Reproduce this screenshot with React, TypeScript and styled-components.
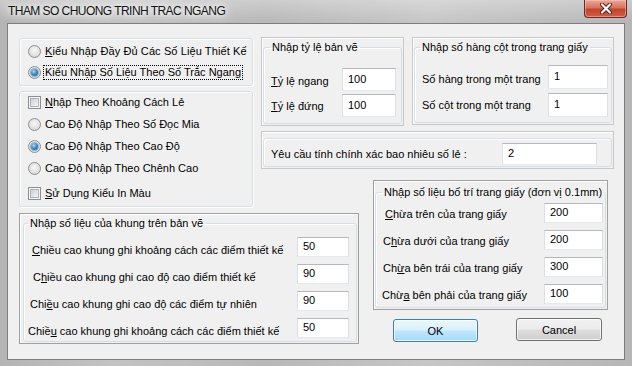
import React from 'react';
import styled, { createGlobalStyle } from 'styled-components';

const GlobalStyle = createGlobalStyle`
  html, body {
    margin: 0;
    padding: 0;
    background: #b9b9b9;
  }
  body {
    font-family: 'Liberation Sans', Arial, sans-serif;
    font-size: 11px;
    color: #000;
  }
`;

const Window = styled.div`
  width: 632px;
  height: 366px;
  box-sizing: border-box;
  display: flex;
  flex-direction: column;
  padding: 0 7px 6px 7px;
  background:
    linear-gradient(180deg, rgba(255, 255, 255, 0.3) 0%, rgba(255, 255, 255, 0) 22px),
    linear-gradient(90deg, #b4b4b4 0%, #c3c3c3 18%, #b8b8b8 42%, #c6c6c6 68%, #b6b6b6 100%);
`;

const TitleBar = styled.div`
  height: 23px;
  display: flex;
  align-items: flex-start;
`;

const Title = styled.span`
  margin: 4px 0 0 1px;
  font-family: 'Liberation Sans', Arial, sans-serif;
  font-size: 12px;
  letter-spacing: -0.55px;
  line-height: 15px;
  color: #111;
  text-shadow: 0 0 5px #fff, 0 0 9px #fff, 0 0 14px #f4f4f4;
`;

const CloseButton = styled.div`
  margin-left: auto;
  margin-right: -2px;
  width: 43px;
  height: 18px;
  box-sizing: border-box;
  border: 1px solid #6a2a22;
  border-top: none;
  border-radius: 0 0 4px 4px;
  background: linear-gradient(180deg, #e9a99a 0%, #d7725f 45%, #c4432c 55%, #cf5f45 100%);
  box-shadow: inset 0 0 0 1px rgba(255, 210, 200, 0.45);
  display: flex;
  align-items: center;
  justify-content: center;
`;

const Client = styled.div`
  flex: 1;
  box-sizing: border-box;
  background: #f0f0f0;
  border: 1px solid #7d7d7d;
  display: flex;
  gap: 8px;
  padding: 14px 0 0 11px;
`;

const LeftColumn = styled.div`
  width: 234px;
  display: flex;
  flex-direction: column;
`;

const RightColumn = styled.div`
  width: 353px;
  margin-top: -1px;
  display: flex;
  flex-direction: column;
`;

const OptionBox = styled.div<{ $height: number; $top: number; $mt?: number }>`
  height: ${({ $height }) => $height}px;
  box-sizing: border-box;
  margin-top: ${({ $mt }) => $mt ?? 0}px;
  padding: ${({ $top }) => $top}px 0 0 8px;
  border: 1px solid #d5dfe5;
  border-radius: 3px;
  box-shadow: inset 1px 1px 0 #fff, 1px 1px 0 #fff;
`;

const OptionRow = styled.div<{ $h: number; $mt?: number }>`
  height: ${({ $h }) => $h}px;
  margin-top: ${({ $mt }) => $mt ?? 0}px;
  display: flex;
  align-items: center;
  white-space: nowrap;
`;

const Radio = styled.span<{ $on?: boolean }>`
  width: 13px;
  height: 13px;
  box-sizing: border-box;
  border-radius: 50%;
  border: 1px solid #8e8f8f;
  background: radial-gradient(circle at 50% 40%, #f8f8f8 0%, #e2e2e2 55%, #c9c9c9 100%);
  display: flex;
  align-items: center;
  justify-content: center;
  flex: none;

  &::after {
    content: '';
    display: ${({ $on }) => ($on ? 'block' : 'none')};
    width: 7px;
    height: 7px;
    border-radius: 50%;
    background: radial-gradient(circle at 40% 35%, #a6dcf7 0%, #3e8fcf 45%, #134f86 100%);
    box-shadow: 0 0 0 1px rgba(30, 80, 130, 0.35);
  }
`;

const Check = styled.span`
  width: 13px;
  height: 13px;
  box-sizing: border-box;
  border: 1px solid #8e8f8f;
  background: #f4f4f4;
  padding: 1px;
  flex: none;

  &::after {
    content: '';
    display: block;
    width: 9px;
    height: 9px;
    box-sizing: border-box;
    border: 1px solid #aeb3b9;
    background: linear-gradient(135deg, #cbcfd5 0%, #e4e6e9 60%, #f6f6f6 100%);
  }
`;

const OptionText = styled.span<{ $focus?: boolean; $spread?: number }>`
  margin-left: 3px;
  padding: 0 1px;
  line-height: 13px;
  letter-spacing: ${({ $spread }) => $spread ?? 0}px;
  outline: ${({ $focus }) => ($focus ? '1px dotted #000' : 'none')};
  outline-offset: 0;
`;

const Frame = styled.div<{ $w: number; $h: number; $dark?: boolean; $pad: string; $ml?: number; $mt?: number }>`
  width: ${({ $w }) => $w}px;
  height: ${({ $h }) => $h}px;
  box-sizing: border-box;
  flex: none;
  margin-left: ${({ $ml }) => $ml ?? 0}px;
  margin-top: ${({ $mt }) => $mt ?? 0}px;
  padding: ${({ $pad }) => $pad};
  border: 1px solid ${({ $dark }) => ($dark ? '#a0a0a0' : '#c8c8c8')};
  box-shadow: inset 1px 1px 0 #fff;
  display: flex;
  flex-direction: column;
`;

const Group = styled.fieldset`
  flex: 1;
  margin: 0;
  min-width: 0;
  padding: 0;
  border: 1px solid #d5dfe5;
  border-radius: 3px;
  box-shadow: inset 1px 1px 0 #fff;
  display: flex;
  flex-direction: column;
`;

const Legend = styled.legend<{ $ml: number }>`
  margin-left: ${({ $ml }) => $ml}px;
  padding: 0 2px;
  line-height: 13px;
  font-size: 11px;
  white-space: nowrap;
`;

const Plain = styled.div`
  flex: 1;
  border: 1px solid #d5dfe5;
  border-radius: 3px;
  box-shadow: inset 1px 1px 0 #fff;
  display: flex;
  align-items: center;
  padding: 2px 14px 0 7px;
`;

const Rows = styled.div<{ $top: number; $gap: number; $right: number }>`
  display: flex;
  flex-direction: column;
  gap: ${({ $gap }) => $gap}px;
  padding: ${({ $top }) => $top}px ${({ $right }) => $right}px 0 0;
`;

const FieldRow = styled.div`
  flex: 1;
  display: flex;
  align-items: center;
  justify-content: space-between;
  white-space: nowrap;
`;

const Label = styled.span<{ $indent: number; $drop?: number }>`
  padding-left: ${({ $indent }) => $indent}px;
  padding-top: ${({ $drop }) => ($drop ?? 0) * 2}px;
  line-height: 13px;
`;

const TextBox = styled.input<{ $w: number; $h: number }>`
  width: ${({ $w }) => $w}px;
  height: ${({ $h }) => $h}px;
  box-sizing: border-box;
  margin: 0;
  padding: 0 0 2px 5px;
  border: 1px solid #dbdfe6;
  border-top-color: #b5b8bf;
  border-bottom-color: #e3e9ef;
  background: #fff;
  font-family: 'Liberation Sans', Arial, sans-serif;
  font-size: 11px;
  color: #000;
  outline: none;
  flex: none;
`;

const TopRow = styled.div`
  display: flex;
  gap: 8px;
  align-items: flex-start;
`;

const ButtonRow = styled.div`
  display: flex;
  gap: 38px;
  margin-top: 8px;
  padding-left: 132px;
  align-items: flex-start;
`;

const Button = styled.button<{ $primary?: boolean }>`
  width: ${({ $primary }) => ($primary ? 85 : 86)}px;
  height: 23px;
  margin-top: ${({ $primary }) => ($primary ? 1 : 0)}px;
  padding: 0;
  border-radius: 3px;
  font-family: 'Liberation Sans', Arial, sans-serif;
  font-size: 11px;
  color: #000;
  border: 1px solid ${({ $primary }) => ($primary ? '#3c7fb1' : '#707070')};
  background: ${({ $primary }) =>
    $primary
      ? 'linear-gradient(180deg, #eaf6fd 0%, #d9f0fc 48%, #bee6fd 52%, #a7d9f5 100%)'
      : 'linear-gradient(180deg, #f2f2f2 0%, #ebebeb 48%, #dddddd 52%, #cfcfcf 100%)'};
  box-shadow: inset 0 0 0 1px rgba(255, 255, 255, 0.75);
`;

const khungRows = [
  { label: <><u>C</u>hiều cao khung ghi khoảng cách các điểm thiết kế</>, indent: 8, value: '50' },
  { label: <>C<u>h</u>iều cao khung ghi cao độ cao điểm thiết kế</>, indent: 9, value: '90' },
  { label: <>Chi<u>ề</u>u cao khung ghi cao độ các điểm tự nhiên</>, indent: 6, value: '90' },
  { label: <>Chiề<u>u</u> cao khung ghi khoảng cách các điểm thiết kế</>, indent: 4, value: '50' },
];

const pageRows = [
  { label: <><u>C</u>hừa trên của trang giấy</>, indent: 9, value: '200' },
  { label: <>C<u>h</u>ừa dưới của trang giấy</>, indent: 7, value: '200' },
  { label: <>Ch<u>ừ</u>a bên trái của trang giấy</>, indent: 7, value: '300' },
  { label: <>Chừ<u>a</u> bên phải của trang giấy</>, indent: 6, value: '100' },
];

const App: React.FC = () => {
  return (
    <Window>
      <GlobalStyle />
      <TitleBar>
        <Title>THAM SO CHUONG TRINH TRAC NGANG</Title>
        <CloseButton>
          <svg width="14" height="11" viewBox="0 0 14 11">
            <path d="M3 1.5 L11 9.5 M11 1.5 L3 9.5" stroke="#5a1d14" strokeWidth="4" strokeLinecap="round" />
            <path d="M3 1.5 L11 9.5 M11 1.5 L3 9.5" stroke="#fff" strokeWidth="2.2" strokeLinecap="round" />
          </svg>
        </CloseButton>
      </TitleBar>

      <Client>
        <LeftColumn>
          <OptionBox $height={48} $top={2}>
            <OptionRow $h={21}>
              <Radio />
              <OptionText $spread={0.1}><u>K</u>iểu Nhập Đầy Đủ Các Số Liệu Thiết Kế</OptionText>
            </OptionRow>
            <OptionRow $h={21}>
              <Radio $on />
              <OptionText $focus>Kiểu Nhập Số Liệu Theo Số Trắc Ngang</OptionText>
            </OptionRow>
          </OptionBox>

          <OptionBox $height={116} $top={0} $mt={5}>
            <OptionRow $h={21}>
              <Check />
              <OptionText><u>N</u>hập Theo Khoảng Cách Lẻ</OptionText>
            </OptionRow>
            <OptionRow $h={22}>
              <Radio />
              <OptionText>Cao Độ Nhập Theo Số Đọc Mia</OptionText>
            </OptionRow>
            <OptionRow $h={22}>
              <Radio $on />
              <OptionText>Cao Độ Nhập Theo Cao Độ</OptionText>
            </OptionRow>
            <OptionRow $h={22}>
              <Radio />
              <OptionText>Cao Độ Nhập Theo Chênh Cao</OptionText>
            </OptionRow>
            <OptionRow $h={22} $mt={3}>
              <Check />
              <OptionText><u>S</u>ử Dụng Kiểu In Màu</OptionText>
            </OptionRow>
          </OptionBox>

          <Frame $w={340} $h={131} $dark $pad="3px 1px 1px 3px" $mt={6}>
            <Group>
              <Legend $ml={4}>Nhập số liệu của khung trên bản vẽ</Legend>
              <Rows $top={6} $gap={6} $right={7}>
                {khungRows.map((r, i) => (
                  <FieldRow key={i}>
                    <Label $indent={r.indent} $drop={4}>{r.label}</Label>
                    <TextBox $w={52} $h={20} defaultValue={r.value} />
                  </FieldRow>
                ))}
              </Rows>
            </Group>
          </Frame>
        </LeftColumn>

        <RightColumn>
          <TopRow>
            <Frame $w={143} $h={89} $pad="3px 1px 1px 1px">
              <Group>
                <Legend $ml={6}>Nhập tỷ lệ bản vẽ</Legend>
                <Rows $top={14} $gap={3} $right={5}>
                  <FieldRow>
                    <Label $indent={7} $drop={2}><u>T</u>ỷ lệ ngang</Label>
                    <TextBox $w={54} $h={23} defaultValue="100" />
                  </FieldRow>
                  <FieldRow>
                    <Label $indent={7} $drop={1}><u>T</u>ỷ lệ đứng</Label>
                    <TextBox $w={54} $h={23} defaultValue="100" />
                  </FieldRow>
                </Rows>
              </Group>
            </Frame>
            <Frame $w={202} $h={88} $pad="3px 1px 1px 1px">
              <Group>
                <Legend $ml={5}>Nhập số hàng cột trong trang giấy</Legend>
                <Rows $top={11} $gap={4} $right={3}>
                  <FieldRow>
                    <Label $indent={7} $drop={2}>Số hàng trong một trang</Label>
                    <TextBox $w={60} $h={24} defaultValue="1" />
                  </FieldRow>
                  <FieldRow>
                    <Label $indent={7}>Số cột trong một trang</Label>
                    <TextBox $w={60} $h={24} defaultValue="1" />
                  </FieldRow>
                </Rows>
              </Group>
            </Frame>
          </TopRow>

          <Frame $w={353} $h={38} $pad="6px 1px 1px 1px" $mt={5}>
            <Plain>
              <FieldRow>
                <span>Yêu cầu tính chính xác bao nhiêu số lẻ :</span>
                <TextBox $w={95} $h={22} defaultValue="2" />
              </FieldRow>
            </Plain>
          </Frame>

          <Frame $w={235} $h={130} $dark $pad="5px 1px 1px 1px" $ml={112} $mt={11}>
            <Group>
              <Legend $ml={6}>Nhập số liệu bố trí trang giấy (đơn vị 0.1mm)</Legend>
              <Rows $top={4} $gap={7} $right={2}>
                {pageRows.map((r, i) => (
                  <FieldRow key={i}>
                    <Label $indent={r.indent} $drop={1}>{r.label}</Label>
                    <TextBox $w={59} $h={20} defaultValue={r.value} />
                  </FieldRow>
                ))}
              </Rows>
            </Group>
          </Frame>

          <ButtonRow>
            <Button $primary>OK</Button>
            <Button>Cancel</Button>
          </ButtonRow>
        </RightColumn>
      </Client>
    </Window>
  );
};

export default App;
